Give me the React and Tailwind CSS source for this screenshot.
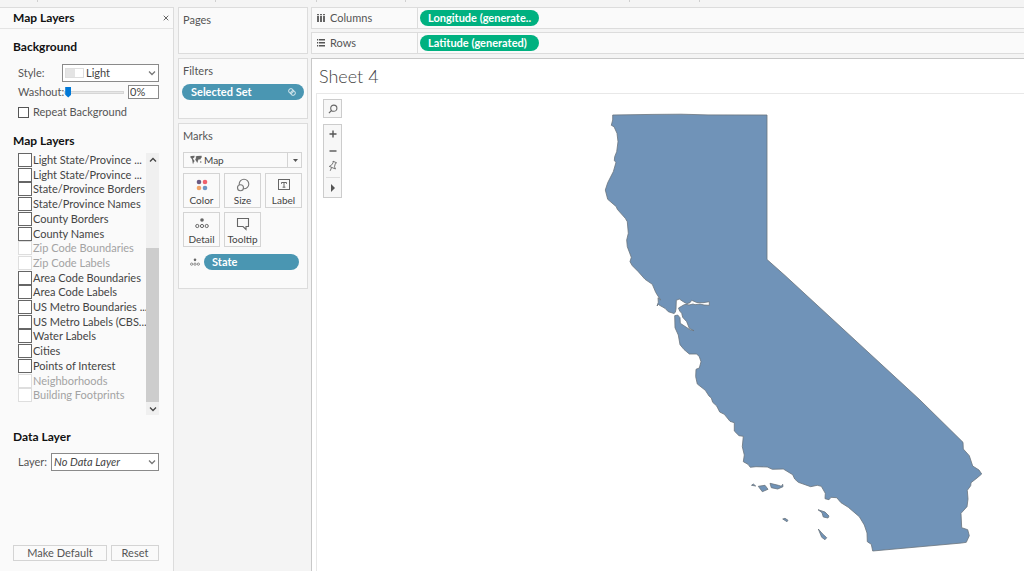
import React from 'react';

const LAYERS = [
  { name: 'Light State/Province ...' },
  { name: 'Light State/Province ...' },
  { name: 'State/Province Borders' },
  { name: 'State/Province Names' },
  { name: 'County Borders' },
  { name: 'County Names' },
  { name: 'Zip Code Boundaries', disabled: true },
  { name: 'Zip Code Labels', disabled: true },
  { name: 'Area Code Boundaries' },
  { name: 'Area Code Labels' },
  { name: 'US Metro Boundaries ...' },
  { name: 'US Metro Labels (CBS...' },
  { name: 'Water Labels' },
  { name: 'Cities' },
  { name: 'Points of Interest' },
  { name: 'Neighborhoods', disabled: true },
  { name: 'Building Footprints', disabled: true },
];

const MAINLAND =
  'M612.7 115L653 114.4 681 114.2 708 114.9 767 115V259.5L785 275.5 920 400 963 442.3 963.3 449 969.3 455.7 972.7 466 979 470 981.7 474 977 478 971 482.7 970.7 485.7 967.3 490.3 968 499 967 506.7 961 513.3 961.7 527.7 967.7 529.7 969.3 535.7 966.3 542.3 961.7 543 872.7 551 871.3 544.3 867.3 541.7 867 533 864.3 525 859.3 516.7 848.3 507.3 841 502.7 836.7 497.7 831 497.3 829 499.7 825 498.7 825.3 493.3 821.3 486.3 817.3 485.3 810.7 486.7 798.3 482.3 794.7 479 792.7 474.7 783.3 469 772.3 469.3 767.3 467 756 466.7 750.3 467.3 748 464.3 743.3 461.7 744.3 455 742.3 446.7 743.3 436.3 739 435.7 734.3 431 734.3 422.7 730 421.3 724.3 414.3 719.7 412 716.7 406 712.7 402.3 711.3 398 709 396 705.3 390.3 697.3 384 695.7 376.7 696 369.3 699.3 368 701 361.7 699.3 356.7 696.7 354 689.3 354 684 349.5 680 344.7 678.3 335 675 327.7 674.7 315.7 677.7 315 680 317.7 680.3 323.3 690 329.7 694 330.7 689.3 328.3 686.7 321.7 682.7 317.3 681.7 313.3 679.7 311 678.5 308 684.5 304.5 687 304.5 689 305 693 304 695 304.7 700 304 704 305 709.3 305.3 709.3 301.7 703 302.7 696.7 302.5 691.7 300.3 690 302.7 686.7 303.7 683.3 301.7 679.3 299 676.3 300.3 676 309 675.3 312.3 674 313.5 668.3 311.7 665 308.3 660 305.5 658.5 304.5 657 306 658.3 302.3 658 297.7 660.7 300 657.3 295 655.7 292.3 652.3 284.3 645 279.3 638.3 271.7 632.3 265.7 630 261.7 631.3 257.3 627.3 246.7 626.7 240 628.3 233.3 627.3 221.7 625.3 218.3 617.3 209.3 616.3 206.7 607.7 199.3 605.3 190 607.7 182.7 613.3 171.7 616 162.3 614.3 160.7 614.7 156.7 616.7 151.7 618 141.7 617 133.3 614 126.7 611.3 125.3 612.7 120Z';

const ISLANDS =
  'M751.5 485.3L753.3 484 755.7 486ZM758.3 486.3L765 485.3 768 489.3 762.3 491.7ZM770 483.3L778.3 485.3 781.3 486.3 782.7 484.3 783 486.7 777.7 489 771.3 487.7ZM782.7 519L785 518.3 788 520.3 787 521.7ZM818 509.7L825 512 829 516 828 518 823.3 517 822 512.7ZM818.3 529L822.7 534 826.7 537.7 825 539.7 821.7 537.3Z';

function Chevron({ up = false, className = '' }) {
  return (
    <svg viewBox="0 0 8 8" className={`w-2 h-2 fill-none ${className}`}>
      <path d={up ? 'M1 5.5L4 2.5 7 5.5' : 'M1 2.5L4 5.5 7 2.5'} stroke="currentColor" strokeWidth="1.3" />
    </svg>
  );
}

function DetailIcon({ className }) {
  return (
    <svg viewBox="0 0 14 12" className={className}>
      <circle cx="7" cy="3" r="1.8" fill="#666" />
      <g fill="none" stroke="#666" strokeWidth="1">
        <circle cx="2.3" cy="9" r="1.6" />
        <circle cx="7" cy="9" r="1.6" />
        <circle cx="11.7" cy="9" r="1.6" />
      </g>
    </svg>
  );
}

function ColorIcon() {
  return (
    <svg viewBox="0 0 14 14" className="w-3.5 h-3.5">
      <circle cx="4" cy="4" r="2.3" fill="#6b5b82" />
      <circle cx="10" cy="4" r="2.3" fill="#f0616c" />
      <circle cx="4" cy="10" r="2.3" fill="#f3a467" />
      <circle cx="10" cy="10" r="2.3" fill="#6f96c4" />
    </svg>
  );
}

function SizeIcon() {
  return (
    <svg viewBox="0 0 14 14" className="w-3.5 h-3.5" fill="#fafafa" stroke="#777" strokeWidth="1.1">
      <circle cx="8" cy="6" r="4.8" />
      <circle cx="4.5" cy="9.8" r="3" />
    </svg>
  );
}

function LabelIcon() {
  return (
    <svg viewBox="0 0 14 14" className="w-3.5 h-3.5" fill="none" stroke="#666">
      <rect x="1.5" y="1.5" width="11" height="10" />
      <path d="M4.5 5.8V4.5h5v1.3M7 4.5v4.6M5.6 9.2h2.8" />
    </svg>
  );
}

function TooltipIcon() {
  return (
    <svg viewBox="0 0 14 14" className="w-3.5 h-3.5" fill="none" stroke="#666" strokeWidth="1.1">
      <path d="M1.5 1.5h11v8h-2.5v3l-3-3H1.5z" />
    </svg>
  );
}

function MapIcon() {
  return (
    <svg viewBox="0 0 13 10" className="w-3 h-2.5 shrink-0" fill="#666">
      <path d="M0 1.5L1.5.7 5 .5 4.8 2 3.5 3 3 4 4.5 5 4.8 6.5 3.7 8 3.5 9.5 2.9 8.5 2.6 6 2 4 .8 2.6zM6 1.5L7.5.7 12.5.5 12.8 2 11.8 3 11 4.8 10.2 4 9.7 5.5 8.8 4 8.5 6.5 7.8 8.2 7 6.5 6 5.2 5.7 4 6.8 2.8zM11 6.4l1.4.2-.2 1.3-1.3-.3z" />
    </svg>
  );
}

function Heading({ children, className = '' }) {
  return <h2 className={`pl-[13px] text-xs leading-4 font-bold text-[#111] ${className}`}>{children}</h2>;
}

function Card({ title, className = '', children }) {
  return (
    <section className={`border border-[#dcdcdc] bg-[#fafafa] px-1 pt-1 ${className}`}>
      <h3 className="leading-4 text-[#555]">{title}</h3>
      {children}
    </section>
  );
}

function MarkButton({ icon, label }) {
  return (
    <button className="flex h-[35px] flex-col items-center justify-between border border-[#d4d4d4] pt-1 text-[#444] text-[10px]">
      {icon}
      <span className="leading-[14px]">{label}</span>
    </button>
  );
}

function Shelf({ icon, label, pill }) {
  return (
    <div className="flex h-[22px] border border-r-0 border-[#dcdcdc] bg-[#fafafa]">
      <div className="flex w-[106px] items-center gap-[5px] border-r border-[#dcdcdc] pl-[5px] text-[#555]">
        {icon}
        <span>{label}</span>
      </div>
      <div className="flex items-center pl-0.5">
        <button className="h-4 w-[119px] rounded-full bg-[#00b180] pl-2 text-left leading-4 font-bold text-white">
          {pill}
        </button>
      </div>
    </div>
  );
}

function LayersPanel() {
  return (
    <aside className="flex w-[174px] shrink-0 flex-col border-t border-r border-[#dcdcdc] bg-[#fafafa]">
      <header className="flex h-[21px] items-center justify-between border-b border-[#e4e4e4] pr-1">
        <Heading>Map Layers</Heading>
        <button aria-label="Close" className="text-[#666]">
          <svg viewBox="0 0 6 6" className="h-1.5 w-1.5" stroke="currentColor">
            <path d="M.7.7l4.6 4.6M5.3.7L.7 5.3" />
          </svg>
        </button>
      </header>

      <Heading className="mt-2.5">Background</Heading>
      <div className="mt-[9px] flex flex-col gap-[2px] pl-[18px] pr-3.5 text-[#555]">
        <div className="flex items-center">
          <label htmlFor="style" className="w-11">Style:</label>
          <div className="relative flex flex-1 items-center">
            <select id="style" className="h-[18px] w-full appearance-none border border-[#8a8a8a] bg-white pl-[23px] text-[#444]">
              <option>Light</option>
            </select>
            <span className="pointer-events-none absolute left-[3px] flex h-2.5 w-[19px] border border-[#dedede] bg-white">
              <span className="w-1/2 bg-[#e4e4e4]" />
            </span>
            <Chevron className="pointer-events-none absolute right-[3px] text-[#777]" />
          </div>
        </div>
        <div className="flex h-4 items-center">
          <label htmlFor="washout">Washout:</label>
          <input
            id="washout"
            type="range"
            defaultValue="0"
            className="mr-1 h-3 w-0 flex-1 appearance-none bg-transparent [&::-webkit-slider-runnable-track]:h-[3px] [&::-webkit-slider-runnable-track]:border [&::-webkit-slider-runnable-track]:border-[#d6d6d6] [&::-webkit-slider-runnable-track]:bg-[#e7e7e7] [&::-webkit-slider-thumb]:-mt-[5px] [&::-webkit-slider-thumb]:h-[11px] [&::-webkit-slider-thumb]:w-[6px] [&::-webkit-slider-thumb]:appearance-none [&::-webkit-slider-thumb]:bg-[#0078d7] [&::-webkit-slider-thumb]:[clip-path:polygon(0_0,100%_0,100%_75%,50%_100%,0_75%)]"
          />
          <input
            aria-label="Washout percent"
            defaultValue="0%"
            className="h-3.5 w-[31px] border border-[#8a8a8a] bg-white pl-px text-[#444]"
          />
        </div>
        <label className="flex h-5 items-center gap-1">
          <input type="checkbox" className="h-[11px] w-[11px] appearance-none border border-[#555] bg-white" />
          Repeat Background
        </label>
      </div>

      <Heading className="mt-[11px]">Map Layers</Heading>
      <div className="mt-1 mr-3.5 ml-[18px] flex h-[262px]">
        <ul className="flex h-[250px] min-w-0 flex-1 flex-col">
          {LAYERS.map((layer, i) => (
            <li key={i} className="flex-1">
              <label className={`flex h-3.5 items-center gap-px whitespace-nowrap ${layer.disabled ? 'text-[#a3a3a3]' : 'text-[#444]'}`}>
                <input
                  type="checkbox"
                  disabled={layer.disabled}
                  className="h-3.5 w-3.5 shrink-0 appearance-none border border-[#666] bg-white disabled:border-[#dedede]"
                />
                {layer.name}
              </label>
            </li>
          ))}
        </ul>
        <div className="flex w-[13px] shrink-0 flex-col bg-[#f0f0f0] text-[#444]">
          <button aria-label="Scroll up" className="flex h-[13px] items-center justify-center">
            <Chevron up />
          </button>
          <div className="flex flex-1 flex-col justify-end">
            <div className="h-[154px] bg-[#cdcdcd]" />
          </div>
          <button aria-label="Scroll down" className="flex h-[13px] items-center justify-center">
            <Chevron />
          </button>
        </div>
      </div>

      <Heading className="mt-3.5">Data Layer</Heading>
      <div className="mt-2 flex items-center pr-3.5 pl-[18px] text-[#555]">
        <label htmlFor="layer" className="w-[33px]">Layer:</label>
        <div className="relative flex flex-1 items-center">
          <select id="layer" className="h-[18px] w-full appearance-none border border-[#8a8a8a] bg-white pl-0.5 text-[#444] italic">
            <option>No Data Layer</option>
          </select>
          <Chevron className="pointer-events-none absolute right-[3px] text-[#777]" />
        </div>
      </div>

      <footer className="mt-auto flex gap-1 pr-3.5 pb-2.5 pl-[13px] text-[#555]">
        <button className="h-4 flex-2 border border-[#d4d4d4] leading-[14px]">Make Default</button>
        <button className="h-4 flex-1 border border-[#d4d4d4] leading-[14px]">Reset</button>
      </footer>
    </aside>
  );
}

function ShelfCards() {
  return (
    <div className="flex w-[130px] shrink-0 flex-col gap-1">
      <Card title="Pages" className="h-[47px]" />
      <Card title="Filters" className="h-[61px]">
        <button className="-ml-px mt-[5px] flex h-4 w-[122px] items-center justify-between rounded-full bg-[#4a96b2] pr-2 pl-[9px] font-bold text-white">
          Selected Set
          <svg viewBox="0 0 10 10" className="h-2 w-2" fill="none" stroke="currentColor">
            <circle cx="3.7" cy="3.7" r="2.9" />
            <circle cx="6.3" cy="6.3" r="2.9" />
          </svg>
        </button>
      </Card>
      <Card title="Marks" className="h-[166px]">
        <div className="relative mt-2 flex items-center">
          <select aria-label="Mark type" className="h-4 w-[119px] appearance-none border border-[#d4d4d4] bg-[#fafafa] pl-5 text-[10px] leading-[14px] text-[#444]">
            <option>Map</option>
          </select>
          <div className="pointer-events-none absolute inset-y-0 left-[7px] flex items-center">
            <MapIcon />
          </div>
          <div className="pointer-events-none absolute inset-y-0 right-[1px] flex w-[15px] items-center justify-center border-l border-[#d4d4d4]">
            <svg viewBox="0 0 5 3" className="h-[3px] w-[5px]" fill="#555">
              <path d="M0 0h5L2.5 3z" />
            </svg>
          </div>
        </div>
        <div className="mt-[5px] grid w-[119px] grid-cols-3 gap-1">
          <MarkButton label="Color" icon={<ColorIcon />} />
          <MarkButton label="Size" icon={<SizeIcon />} />
          <MarkButton label="Label" icon={<LabelIcon />} />
          <MarkButton label="Detail" icon={<DetailIcon className="h-3 w-3.5" />} />
          <MarkButton label="Tooltip" icon={<TooltipIcon />} />
        </div>
        <div className="mt-[7px] flex items-center gap-1 pl-[7px]">
          <DetailIcon className="h-2.5 w-2.5" />
          <button className="h-4 w-[95px] rounded-full bg-[#4a96b2] pl-2 text-left leading-4 font-bold text-white">
            State
          </button>
        </div>
      </Card>
    </div>
  );
}

function MapToolbar() {
  return (
    <div className="absolute top-[5px] left-1.5 flex w-[19px] flex-col gap-1.5 text-[#555]">
      <button aria-label="Search" className="flex h-[19px] items-center justify-center border border-[#ccc] bg-[#f7f7f7]">
        <svg viewBox="0 0 10 10" className="h-2.5 w-2.5" fill="none" stroke="#666" strokeWidth="1.1">
          <circle cx="5.8" cy="4.2" r="3.1" />
          <path d="M3.5 6.5L.9 9.1" />
        </svg>
      </button>
      <div className="flex flex-col items-center border border-[#ccc] bg-[#f7f7f7]">
        <button aria-label="Zoom in" className="flex h-[17px] items-center">
          <svg viewBox="0 0 8 8" className="h-2 w-2" stroke="currentColor" strokeWidth="1.4">
            <path d="M4 .5v7M.5 4h7" />
          </svg>
        </button>
        <button aria-label="Zoom out" className="flex h-[17px] items-center">
          <svg viewBox="0 0 8 8" className="h-2 w-2" stroke="currentColor" strokeWidth="1.4">
            <path d="M.5 4h7" />
          </svg>
        </button>
        <button aria-label="Reset axes" className="flex h-[18px] items-center pb-1">
          <svg viewBox="0 0 10 12" className="h-3 w-2.5" fill="none" stroke="#666" strokeWidth="0.9">
            <path d="M5 1.2l3.6 1.6-1.3.7-.8 3.3 1 2.2L3 7.1 1.3 6.4l1.8-.9 2-2.6zM3.6 7.5L2.2 10.8" />
          </svg>
        </button>
        <span className="h-px w-3.5 bg-[#ddd]" />
        <button aria-label="Map tools" className="flex h-[19px] items-center">
          <svg viewBox="0 0 4 8" className="h-2 w-1" fill="currentColor">
            <path d="M0 0l4 4-4 4z" />
          </svg>
        </button>
      </div>
    </div>
  );
}

export default function App() {
  return (
    <div className="flex min-h-screen flex-col overflow-hidden bg-[#f4f4f4] font-['Lato',sans-serif] text-[11px] leading-4">
      {/* lower edge of the toolbar, with its separators */}
      <div className="flex h-[7px] shrink-0 items-start pl-[37px]">
        <span className="mr-[177px] h-0.5 w-px bg-[#d0d0d0]" />
        <span className="mr-[100px] h-0.5 w-px bg-[#d0d0d0]" />
        <span className="mr-[88px] h-0.5 w-px bg-[#d0d0d0]" />
        <span className="mr-[223px] h-0.5 w-px bg-[#d0d0d0]" />
        <span className="mr-[69px] h-0.5 w-px bg-[#d0d0d0]" />
        <span className="h-0.5 w-px bg-[#d0d0d0]" />
      </div>

      <div className="flex flex-1 gap-1">
        <LayersPanel />
        <ShelfCards />
        <main className="-ml-px flex min-w-0 flex-1 flex-col gap-[3px]">
          <Shelf
            label="Columns"
            pill="Longitude (generate.."
            icon={
              <svg viewBox="0 0 8 9" className="h-[9px] w-2" fill="#666">
                <path d="M0 0h2v1.2H0zM0 2h2v6H0zM3 0h2v1.2H3zM3 2h2v6H3zM6 0h2v1.2H6zM6 2h2v6H6z" />
              </svg>
            }
          />
          <Shelf
            label="Rows"
            pill="Latitude (generated)"
            icon={
              <svg viewBox="0 0 8 9" className="h-[9px] w-2" fill="#555">
                <path d="M0 0h1.2v1.5H0zM2 0h6v1.5H2zM0 3h1.2v1.5H0zM2 3h6v1.5H2zM0 6h1.2v1.5H0zM2 6h6v1.5H2z" />
              </svg>
            }
          />
          <section className="mt-px flex flex-1 flex-col border-t border-l border-[#c8c8c8] bg-white pl-1">
            <h1 className="pt-1 pb-1 pl-[3px] text-[18px] leading-[26px] font-light text-[#444]">Sheet 4</h1>
            <div className="relative flex-1 border-t border-l border-[#e8e8e8]">
              <svg viewBox="317 94 707 477" className="block w-full" role="img" aria-label="California">
                <g fill="#7093b8" stroke="#6a737c" strokeWidth="0.8" strokeLinejoin="round">
                  <path d={MAINLAND} />
                  <path d={ISLANDS} />
                </g>
              </svg>
              <MapToolbar />
            </div>
          </section>
        </main>
      </div>
    </div>
  );
}
